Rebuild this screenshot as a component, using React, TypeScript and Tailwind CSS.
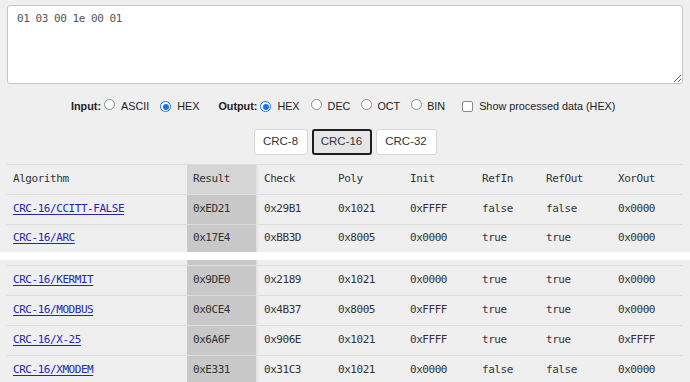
import { useState } from "react";

const mono = "font-['DejaVu_Sans_Mono',monospace] text-[11px] tracking-[-0.45px]";

const cols = "grid grid-cols-[180px_71px_74px_72px_72px_64px_72px_70px]";

interface Crc {
  name: string;
  result: string;
  check: string;
  poly: string;
  init: string;
  refIn: string;
  refOut: string;
  xorOut: string;
}

const topRows: Crc[] = [
  { name: "CRC-16/CCITT-FALSE", result: "0xED21", check: "0x29B1", poly: "0x1021", init: "0xFFFF", refIn: "false", refOut: "false", xorOut: "0x0000" },
  { name: "CRC-16/ARC", result: "0x17E4", check: "0xBB3D", poly: "0x8005", init: "0x0000", refIn: "true", refOut: "true", xorOut: "0x0000" },
];

const bottomRows: Crc[] = [
  { name: "CRC-16/KERMIT", result: "0x9DE0", check: "0x2189", poly: "0x1021", init: "0x0000", refIn: "true", refOut: "true", xorOut: "0x0000" },
  { name: "CRC-16/MODBUS", result: "0x0CE4", check: "0x4B37", poly: "0x8005", init: "0xFFFF", refIn: "true", refOut: "true", xorOut: "0x0000" },
  { name: "CRC-16/X-25", result: "0x6A6F", check: "0x906E", poly: "0x1021", init: "0xFFFF", refIn: "true", refOut: "true", xorOut: "0xFFFF" },
  { name: "CRC-16/XMODEM", result: "0xE331", check: "0x31C3", poly: "0x1021", init: "0x0000", refIn: "false", refOut: "false", xorOut: "0x0000" },
];

const Radio = ({ checked }: { checked?: boolean }) => (
  <span
    className={
      "inline-flex items-center justify-center w-[11px] h-[11px] rounded-full bg-white border " +
      (checked ? "border-[#1a73e8]" : "border-[#8a8a8a]")
    }
  >
    {checked && <span className="w-[6px] h-[6px] rounded-full bg-[#1a73e8]" />}
  </span>
);

const Cell = ({ children, result }: { children: React.ReactNode; result?: boolean }) => (
  <div className={"flex items-center pl-[6px] " + (result ? "bg-[#c8c8c8] border-r-2 border-[#e4e4e4]" : "")}>
    {children}
  </div>
);

const DataRow = ({ row, h }: { row: Crc; h: string }) => (
  <div className={cols + " border-t border-[#dcdcdc] text-[#333] " + h}>
    <Cell>
      <a href="#" className="text-[#2626b5] underline underline-offset-2">
        {row.name}
      </a>
    </Cell>
    <Cell result>{row.result}</Cell>
    <Cell>{row.check}</Cell>
    <Cell>{row.poly}</Cell>
    <Cell>{row.init}</Cell>
    <Cell>{row.refIn}</Cell>
    <Cell>{row.refOut}</Cell>
    <Cell>{row.xorOut}</Cell>
  </div>
);

export default function App() {
  const [data, setData] = useState("01 03 00 1e 00 01");
  const [crc, setCrc] = useState("CRC-16");

  return (
    <div className="w-[690px] h-[382px] overflow-hidden bg-[#efefef] font-['Liberation_Sans',Arial,sans-serif] text-[11px] text-[#222]">
      <div className="pt-[5px] pl-[7px] pr-[7px]">
        <textarea
          value={data}
          onChange={(e) => setData(e.target.value)}
          className={
            mono +
            " block w-full h-[79px] bg-white border border-[#c4c4c4] rounded-[3px] px-[9px] pt-[6px] leading-[14px] text-[#555] outline-none"
          }
        />
      </div>

      {/* options */}
      <div className="flex items-center h-[16px] mt-[14px] pl-[71px] text-[10.8px]">
        <b className="font-bold">Input:</b>
        <span className="ml-[3px]"><Radio /></span>
        <span className="ml-[6px]">ASCII</span>
        <span className="ml-[11px]"><Radio checked /></span>
        <span className="ml-[6px]">HEX</span>
        <b className="font-bold ml-[19px]">Output:</b>
        <span className="ml-[3px]"><Radio checked /></span>
        <span className="ml-[6px]">HEX</span>
        <span className="ml-[11px]"><Radio /></span>
        <span className="ml-[6px]">DEC</span>
        <span className="ml-[11px]"><Radio /></span>
        <span className="ml-[5px]">OCT</span>
        <span className="ml-[11px]"><Radio /></span>
        <span className="ml-[5px]">BIN</span>
        <span className="ml-[17px] w-[11px] h-[11px] rounded-[2px] border border-[#8a8a8a] bg-white" />
        <span className="ml-[6px]">Show processed data (HEX)</span>
      </div>

      {/* crc type buttons */}
      <div className="flex justify-center gap-[4px] mt-[15px]">
        {[
          { label: "CRC-8", w: "w-[54px]" },
          { label: "CRC-16", w: "w-[60px]" },
          { label: "CRC-32", w: "w-[61px]" },
        ].map((b) => (
          <button
            key={b.label}
            onClick={() => setCrc(b.label)}
            className={
              b.w +
              " h-[26px] rounded-[3px] text-[11.5px] text-[#333] " +
              (crc === b.label ? "bg-[#e6e6e6] border-2 border-[#1e1e1e]" : "bg-white border border-[#d6d6d6]")
            }
          >
            {b.label}
          </button>
        ))}
      </div>

      {/* results table */}
      <div className={mono + " mt-[9px] ml-[7px] w-[675px]"}>
        <div className={cols + " h-[30px] border-t border-[#dcdcdc] text-[#333]"}>
          <Cell>Algorithm</Cell>
          <div className="flex items-center pl-[6px] bg-[#d5d5d5] border-r-2 border-[#e4e4e4]">Result</div>
          <Cell>Check</Cell>
          <Cell>Poly</Cell>
          <Cell>Init</Cell>
          <Cell>RefIn</Cell>
          <Cell>RefOut</Cell>
          <Cell>XorOut</Cell>
        </div>
        <DataRow row={topRows[0]} h="h-[30px]" />
        <DataRow row={topRows[1]} h="h-[28px]" />
      </div>

      <div className="h-[8px] bg-white" />

      <div className={mono + " ml-[7px] w-[675px]"}>
        <div className={cols + " h-[5px]"}>
          <div />
          <div className="bg-[#c8c8c8] border-r-2 border-[#e4e4e4]" />
        </div>
        {bottomRows.map((r) => (
          <DataRow key={r.name} row={r} h="h-[30px]" />
        ))}
      </div>
    </div>
  );
}
